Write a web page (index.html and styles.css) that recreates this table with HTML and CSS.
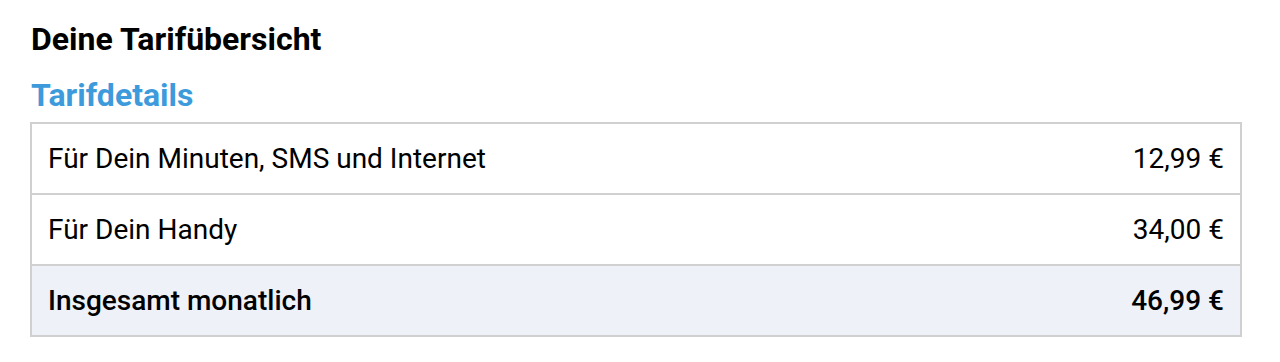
FILE: index.html
```html
<!DOCTYPE html>
<html lang="de">
<head>
  <meta charset="UTF-8">
  <title>Deine Tarifübersicht</title>
  <link rel="stylesheet" href="styles.css">
</head>
<body>
  <div class="overview">
    <h1 class="overview-title">Deine Tarifübersicht</h1>
    <h2 class="section-title">Tarifdetails</h2>
    <div class="tariff-table">
      <div class="tariff-row">
        <span>Für Dein Minuten, SMS und Internet</span>
        <span>12,99 €</span>
      </div>
      <div class="tariff-row">
        <span>Für Dein Handy</span>
        <span>34,00 €</span>
      </div>
      <div class="tariff-row total">
        <span>Insgesamt monatlich</span>
        <span>46,99 €</span>
      </div>
    </div>
  </div>
</body>
</html>
```

FILE: styles.css
```css
body {
  margin: 0;
  font-family: Roboto, "Liberation Sans", Arial, sans-serif;
  color: #000;
  background: #fff;
}
.overview {
  padding: 21px 38px 0 30px;
}
.overview-title {
  margin: 0 0 0 1px;
  font-size: 32px;
  font-weight: 700;
  line-height: 36px;
}
.section-title {
  margin: 19px 0 8px 1px;
  font-size: 32px;
  font-weight: 700;
  line-height: 38px;
  color: #3d9bdc;
}
.tariff-table {
  border: 2px solid #d0d0d0;
}
.tariff-row {
  display: flex;
  justify-content: space-between;
  align-items: center;
  height: 69px;
  padding: 0 16px;
  font-size: 28px;
}
.tariff-row + .tariff-row {
  border-top: 2px solid #d0d0d0;
}
.tariff-row.total {
  background-color: #eef1f8;
  font-weight: 500;
}
```
